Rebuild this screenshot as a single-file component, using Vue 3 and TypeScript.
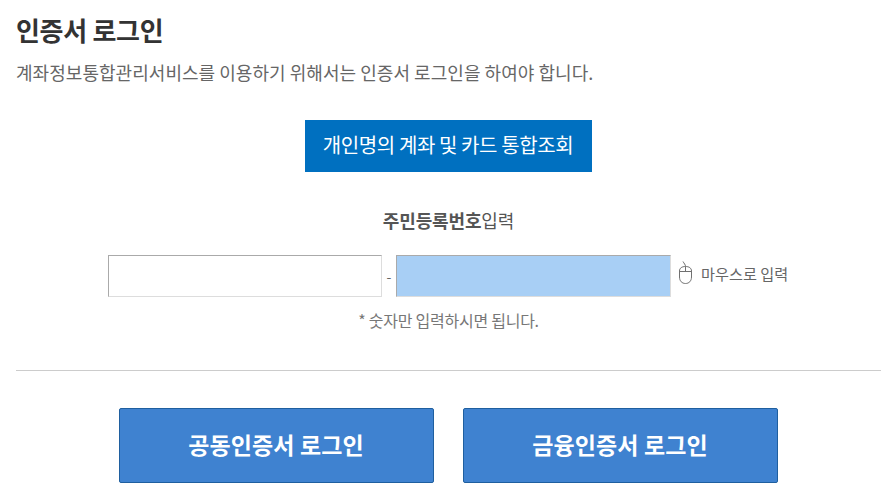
<script setup lang="ts">
const title: string = '인증서 로그인'
</script>

<template>
  <div class="page">
    <h2 class="title">{{ title }}</h2>
    <p class="desc">계좌정보통합관리서비스를 이용하기 위해서는 인증서 로그인을 하여야 합니다.</p>
    <div class="center">
      <button class="primary" type="button">개인명의 계좌 및 카드 통합조회</button>
    </div>
    <p class="label"><b>주민등록번호</b>입력</p>
    <div class="inputs">
      <input class="field" type="text" />
      <span class="dash">-</span>
      <input class="field second" type="text" />
      <span class="mouse">
        <svg width="16" height="24" viewBox="0 0 16 24" fill="none" stroke="#707070" stroke-width="1">
          <path d="M1.500 10C1.500 7 4 5.500 7.500 5.500S13.500 7 13.500 10V16C13.500 20 11 22.500 7.500 22.500S1.500 20 1.500 16Z" />
          <path d="M1.500 10.500H13.500M7.500 10.500V5.500C7.500 3.500 6 2.500 5 0.500" />
        </svg>
        <span>마우스로 입력</span>
      </span>
    </div>
    <p class="note">* 숫자만 입력하시면 됩니다.</p>
    <hr class="line" />
    <div class="actions">
      <button class="login" type="button">공동인증서 로그인</button>
      <button class="login" type="button">금융인증서 로그인</button>
    </div>
  </div>
</template>

<style scoped>
.page {
  box-sizing: border-box;
  width: 895px;
  height: 494px;
  padding: 14px 14px 0 16px;
  background: #fff;
  font-family: "Noto Sans CJK KR", "Noto Sans", sans-serif;
  color: #555;
  overflow: hidden;
}
.title {
  margin: 0;
  font-size: 26px;
  line-height: 32px;
  font-weight: 700;
  color: #333;
  letter-spacing: -0.3px;
}
.desc {
  margin: 14px 0 0;
  font-size: 18px;
  line-height: 24px;
  color: #666;
  letter-spacing: 0.04px;
}
.center {
  display: flex;
  justify-content: center;
  margin-top: 36px;
  padding-right: 1px;
}
.primary {
  width: 287px;
  height: 52px;
  border: 0;
  padding: 0 0 3px;
  background: #0070c0;
  color: #fff;
  font: inherit;
  font-size: 20px;
  letter-spacing: -0.4px;
}
.label {
  margin: 36px 0 0;
  text-align: center;
  font-size: 18px;
  line-height: 24px;
  color: #555;
  letter-spacing: -0.15px;
}
.label b { font-weight: 700; }
.inputs {
  display: flex;
  align-items: center;
  margin-top: 23px;
  padding-left: 92px;
  height: 42px;
}
.field {
  box-sizing: border-box;
  width: 274px;
  height: 42px;
  margin: 0;
  padding: 0;
  border: 1px solid #ddd;
  border-top-color: #aaa;
  border-left-color: #aaa;
  background: #fff;
  outline: none;
}
.second {
  width: 275px;
  background: #a8cff5;
}
.dash {
  width: 14px;
  text-align: center;
  font-size: 14px;
  color: #666;
}
.mouse {
  display: flex;
  align-items: center;
  gap: 7px;
  margin-left: 7px;
  margin-bottom: 6px;
  font-size: 15.200px;
  color: #666;
}
.note {
  margin: 13px 0 0;
  text-align: center;
  font-size: 16px;
  line-height: 20px;
  color: #777;
  letter-spacing: -0.25px;
}
.line {
  margin: 40px 0 0;
  border: 0;
  border-top: 1px solid #ccc;
}
.actions {
  display: flex;
  justify-content: center;
  gap: 29px;
  margin-top: 37px;
  padding-right: 1px;
}
.login {
  box-sizing: border-box;
  width: 315px;
  height: 75px;
  border: 1px solid #1f5f9f;
  border-radius: 2px;
  padding: 0 0 4px;
  background: #3f82d0;
  color: #fff;
  font: inherit;
  font-size: 23px;
  font-weight: 700;
  letter-spacing: 0.1px;
}
</style>
